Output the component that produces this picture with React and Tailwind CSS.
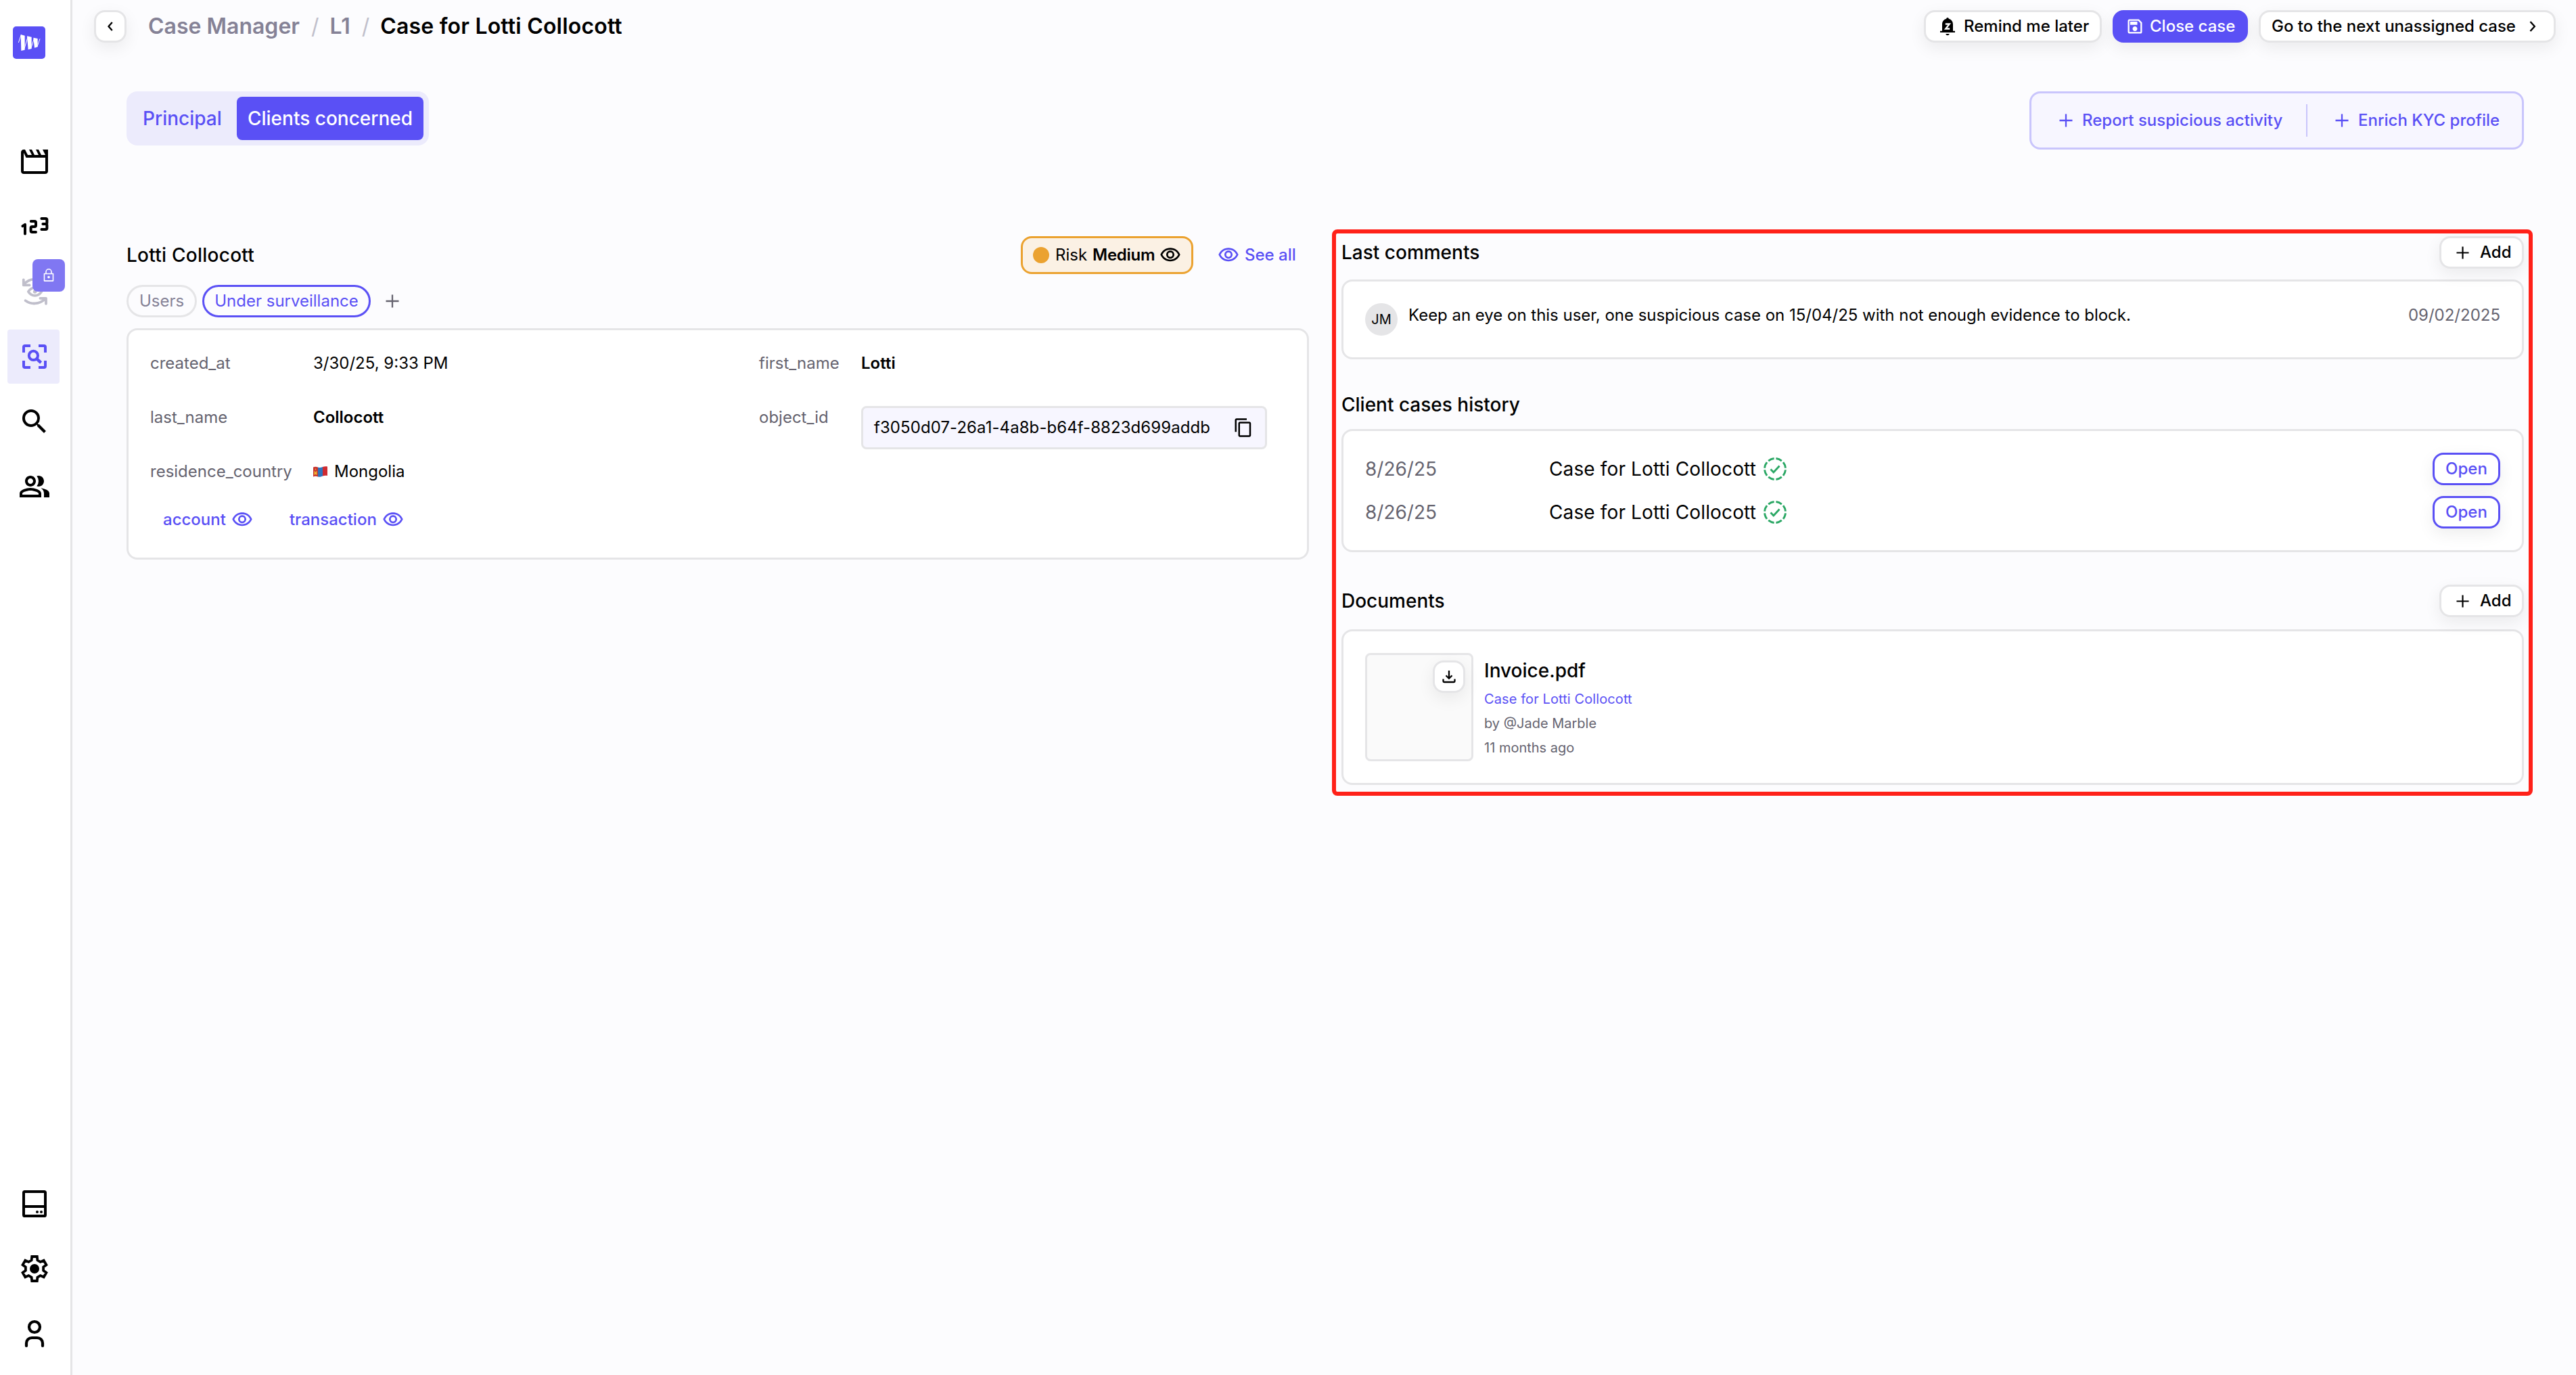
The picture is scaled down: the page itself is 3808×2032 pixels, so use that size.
import React from "react";
import { MdOutlineVisibility, MdOutlinePeopleAlt, MdSearch, MdOutlineSave, MdOutlineContentCopy } from "react-icons/md";

const stroke = (w) => ({
  fill: "none",
  stroke: "currentColor",
  strokeWidth: w,
  strokeLinecap: "round",
  strokeLinejoin: "round",
});

const Svg = ({ children, className = "size-12", box = "0 0 24 24" }) => (
  <svg viewBox={box} className={`shrink-0 ${className}`}>
    {children}
  </svg>
);

const Logo = () => (
  <svg viewBox="0 0 144 144" className="size-12 rounded-[5px] bg-[#5a50f5]" fill="#fff">
    <path d="M35 36 53 41V104L37 108Z M63 43 83 47V99L68 103Z M91 50 110 54V91L96 95Z" />
    <path d="M25 72 37 37M51 98 67 45M81 95 95 52M108 90 120 55" fill="none" stroke="#fff" strokeWidth="3" />
  </svg>
);

const MovieIcon = () => (
  <Svg>
    <path
      fill="currentColor"
      fillRule="evenodd"
      d="M22 3h-4l2 4h-3l-2-4h-2l2 4h-3l-2-4H8l2 4H7L5 3H4c-1.1 0-2 .9-2 2v14c0 1.1.9 2 2 2h16c1.1 0 2-.9 2-2V3zM4 5.4 5.76 9H20v10H4z"
    />
  </Svg>
);

const NumbersIcon = () => (
  <Svg>
    <g {...stroke(2)}>
      <path d="M3.2 11.6 5 10.4V17.3" />
      <path d="M9.4 8H12a1 1 0 0 1 1 1v2a1 1 0 0 1-1 1h-1.7a1 1 0 0 0-1 1v2a1 1 0 0 0 1 1H13" />
      <path d="M17.2 6h3a1 1 0 0 1 1 1v2a1 1 0 0 1-1 1h-2M20.2 10a1 1 0 0 1 1 1v2a1 1 0 0 1-1 1h-3" />
    </g>
  </Svg>
);

const MonitorIcon = () => (
  <Svg>
    <g {...stroke(1.9)}>
      <path d="M18.7 5.4C15 1.8 8.5 1.6 4.2 6.6M3.9 3.2v4h4.4" />
      <path d="M5.3 18.6c4.2 3 10 3 14.4-1M16.2 16.9h4.3v4" />
      <path d="M7.4 12c2.6-3.9 7.2-3.9 9.8 0-2.6 3.9-7.2 3.9-9.8 0z" />
    </g>
    <circle cx="12.3" cy="12" r="1.4" fill="currentColor" />
  </Svg>
);

const ScanIcon = () => (
  <Svg>
    <path
      d="M4 9V5a1 1 0 0 1 1-1h4M15 4h4a1 1 0 0 1 1 1v4M20 15v4a1 1 0 0 1-1 1h-4M9 20H5a1 1 0 0 1-1-1v-4"
      fill="none"
      stroke="currentColor"
      strokeWidth="2"
    />
    <circle cx="11.2" cy="11.2" r="3.3" fill="none" stroke="currentColor" strokeWidth="2" />
    <path d="M13.5 13.5 16.8 16.5" fill="none" stroke="currentColor" strokeWidth="2.2" />
  </Svg>
);

const DriveIcon = () => (
  <Svg>
    <rect x="4" y="3" width="16" height="18" rx="0.8" {...stroke(2)} />
    <path d="M4 14h16" {...stroke(2)} />
    <circle cx="14" cy="18" r="1" fill="currentColor" />
    <circle cx="17" cy="18" r="1" fill="currentColor" />
  </Svg>
);

const gearPath = (() => {
  const tooth = [[-2.2, -6.3], [-1.9, -9], [1.9, -9], [2.2, -6.3]];
  const pts = [];
  for (let i = 0; i < 6; i++) {
    const a = (i * Math.PI) / 3;
    tooth.forEach(([x, y]) =>
      pts.push(
        `${(12 + x * Math.cos(a) - y * Math.sin(a)).toFixed(2)} ${(12 + x * Math.sin(a) + y * Math.cos(a)).toFixed(2)}`
      )
    );
  }
  return `M${pts.join("L")}Z`;
})();

const GearIcon = () => (
  <Svg>
    <path d={gearPath} fill="none" stroke="currentColor" strokeWidth="1.9" />
    <circle cx="12" cy="12" r="3.5" fill="currentColor" />
  </Svg>
);

const UserIcon = () => (
  <Svg>
    <circle cx="12" cy="7" r="4" {...stroke(2.1)} />
    <path d="M6 21v-2a4 4 0 0 1 4-4h4a4 4 0 0 1 4 4v2" {...stroke(2.1)} />
  </Svg>
);

const LockIcon = () => (
  <Svg className="size-6">
    <path d="M5.5 9.5h13v10.6h-13z M8 9.5V6.8a4 4 0 0 1 8 0v2.7" {...stroke(1.6)} />
    <circle cx="12" cy="14.6" r="1.8" fill="currentColor" />
  </Svg>
);

const BellIcon = () => (
  <Svg className="h-7 w-[22px]" box="0 0 22 28">
    <path
      fill="currentColor"
      d="M11 1c1.1 0 1.7.8 1.8 1.8C16.6 3.7 19 7 19 11v9.7h3V23H0v-2.3h3V11c0-4 2.4-7.3 6.2-8.200C9.300 1.800 9.900 1 11 1zM8.300 25h5.400c-.4 1.500-1.400 2.200-2.700 2.200S8.700 26.500 8.300 25z"
    />
    <path d="M7.800 10.500h6L8.200 17.500h6" fill="none" stroke="#fff" strokeWidth="2.300" />
  </Svg>
);

const Plus = ({ className = "size-[19px]" }) => (
  <Svg className={className} box="0 0 20 20">
    <path d="M10 .5v19M.5 10h19" fill="none" stroke="currentColor" strokeWidth="2.300" />
  </Svg>
);

const DownloadIcon = () => (
  <Svg className="size-5" box="0 0 20 20">
    <path
      d="M10 1v11M5.500 8.200 10 12.700l4.500-4.500M1.500 13.500v3.200a1.300 1.300 0 0 0 1.300 1.300h14.400a1.300 1.300 0 0 0 1.300-1.300v-3.200"
      fill="none"
      stroke="currentColor"
      strokeWidth="2.300"
    />
  </Svg>
);

const ResolvedIcon = () => (
  <Svg className="size-9 text-[#2aa764]" box="0 0 36 36">
    <circle
      cx="18"
      cy="18"
      r="15.500"
      fill="none"
      stroke="currentColor"
      strokeWidth="2.900"
      pathLength="80"
      strokeDasharray="7.500 2.500"
      strokeDashoffset="-1.250"
    />
    <path d="m11.500 18.500 4.300 4.500 8.700-9.500" fill="none" stroke="currentColor" strokeWidth="2.800" />
  </Svg>
);

const MongoliaFlag = () => (
  <svg viewBox="0 0 21 16" className="h-4 w-[21px]">
    <path d="M0 1.500C2 .6 4.500 .6 7 1.500V15.500C4.500 14.600 2 14.600 0 15.500Z" fill="#c8352f" />
    <path d="M7 1.500C9.500 2.400 11.500 2 14 1V14.500C11.500 15.500 9.500 16.200 7 15.500Z" fill="#2f74bd" />
    <path d="M14 1C16.500 0 19 0 21 .5V14C19 13.600 16.500 13.600 14 14.500Z" fill="#cf2b31" />
    <path d="M1.500 7h1v6h-1zM4.500 7h1v6h-1zM2.500 8.500h2v3.500h-2zM3.500 3l1 2.500h-2z" fill="#f2b632" />
  </svg>
);

const NavItem = ({ children, active, muted }) => (
  <div
    className={`flex h-20 w-[77px] items-center rounded-[4px] pl-4 ${
      active ? "bg-[#ecebfc] text-[#5a50f5]" : muted ? "relative text-[#c0bfcb]" : "text-black"
    }`}
  >
    {children}
  </div>
);

const Sidebar = () => (
  <aside className="flex w-[107px] shrink-0 flex-col justify-between border-r-[3px] border-[#e5e5e7] bg-white pl-[11px]">
    <div>
      <div className="pt-[39px] pl-2">
        <Logo />
      </div>
      <nav className="mt-28 flex flex-col gap-4">
        <NavItem><MovieIcon /></NavItem>
        <NavItem><NumbersIcon /></NavItem>
        <NavItem muted>
          <MonitorIcon />
          <span className="absolute -top-2 left-[37px] flex size-12 items-center justify-center rounded-[8px] bg-[#8077f2] text-white">
            <LockIcon />
          </span>
        </NavItem>
        <NavItem active><ScanIcon /></NavItem>
        <NavItem><MdSearch className="size-12" /></NavItem>
        <NavItem><MdOutlinePeopleAlt className="size-12" /></NavItem>
      </nav>
    </div>
    <nav className="mb-[21px] flex flex-col gap-4">
      <NavItem><DriveIcon /></NavItem>
      <NavItem><GearIcon /></NavItem>
      <NavItem><UserIcon /></NavItem>
    </nav>
  </aside>
);

const Button = ({ children, className }) => (
  <button
    className={`flex h-12 shrink-0 items-center rounded-[16px] border-[3px] text-[24px] font-medium whitespace-nowrap shadow-[0_8px_24px_rgba(0,0,0,0.07)] ${className}`}
  >
    {children}
  </button>
);

const Header = () => (
  <header className="flex h-12 items-center justify-between pr-[30px] pl-8">
    <div className="flex items-center text-[32px] font-semibold whitespace-nowrap text-[#858296]">
      <Button className="w-12 justify-center border-[#e5e5e7] bg-white text-black">
        <Svg className="h-[14px] w-2" box="0 0 8 14">
          <path d="M6.800 1 1.500 7l5.300 6" fill="none" stroke="currentColor" strokeWidth="2.400" />
        </Svg>
      </Button>
      <span className="ml-8">Case Manager</span>
      <span className="ml-[17px] font-normal text-[#c0bfcb]">/</span>
      <span className="ml-4">L1</span>
      <span className="ml-[17px] font-normal text-[#c0bfcb]">/</span>
      <span className="ml-4 tracking-[0.19px] text-black">Case for Lotti Collocott</span>
    </div>
    <div className="flex gap-4">
      <Button className="w-[263px] gap-[13px] border-[#e5e5e7] bg-white pl-[21px] text-black">
        <BellIcon />
        Remind me later
      </Button>
      <Button className="w-[200px] gap-2 border-[#5a50f5] bg-[#5a50f5] pl-4 text-white">
        <MdOutlineSave className="size-7" />
        Close case
      </Button>
      <Button className="w-[439px] gap-5 border-[#e5e5e7] bg-white pl-4 text-black">
        Go to the next unassigned case
        <Svg className="h-4 w-[10px]" box="0 0 10 16">
          <path d="m1.500 1 6.300 7-6.300 7" fill="none" stroke="currentColor" strokeWidth="2.400" />
        </Svg>
      </Button>
    </div>
  </header>
);

const TopBar = () => (
  <div className="flex items-start justify-between">
    <div className="flex h-20 w-[447px] items-center rounded-[16px] bg-[#ecebfc] pl-2 text-[28px] font-medium whitespace-nowrap text-[#5a50f5]">
      <span className="w-[155px] pl-4">Principal</span>
      <span className="flex h-16 w-[276px] items-center justify-center rounded-[8px] bg-[#5a50f5] text-white">
        Clients concerned
      </span>
    </div>
    <div className="flex h-[86px] w-[731px] items-center rounded-[16px] border-[3px] border-[#c9c5fc] bg-[#f7f6ff] text-[24px] font-medium whitespace-nowrap text-[#5a50f5]">
      <span className="flex w-[406px] items-center gap-[14px] pl-[41px]">
        <Plus className="size-5" />
        Report suspicious activity
      </span>
      <span className="h-12 w-[2px] bg-[#c9c5fc]" />
      <span className="flex items-center gap-[14px] pl-[41px]">
        <Plus className="size-5" />
        Enrich KYC profile
      </span>
    </div>
  </div>
);

const Label = ({ children }) => <span className="self-center pt-[2px] text-[#65636f]">{children}</span>;

const EyeLink = ({ children }) => (
  <span className="flex items-center gap-2">
    {children}
    <MdOutlineVisibility className="size-8" />
  </span>
);

const ClientPanel = () => (
  <section className="w-[1748px]">
    <div className="flex h-14 items-center text-[24px]">
      <h2 className="flex-1 text-[28px] font-medium tracking-[0.25px]">Lotti Collocott</h2>
      <div className="flex h-14 w-[255px] items-center rounded-[16px] border-[3px] border-[#eba230] bg-[#fbf1e4] pl-[15px] whitespace-nowrap">
        <span className="size-6 rounded-full bg-[#eba230]" />
        <span className="ml-[9px]">Risk</span>
        <span className="ml-2 font-semibold tracking-[-0.3px]">Medium</span>
        <MdOutlineVisibility className="ml-[7px] size-8" />
      </div>
      <div className="ml-9 flex w-[135px] items-center gap-2 font-medium whitespace-nowrap text-[#5a50f5]">
        <MdOutlineVisibility className="size-8" />
        See all
      </div>
    </div>
    <div className="mt-4 flex h-12 items-center gap-2 text-[24px] whitespace-nowrap">
      <span className="flex h-12 w-[104px] items-center justify-center rounded-full border-[3px] border-[#e5e5e7] text-[#858296]">
        Users
      </span>
      <span className="flex h-12 w-[249px] items-center justify-center rounded-full border-[3px] border-[#5a50f5] text-[#5a50f5]">
        Under surveillance
      </span>
      <Plus className="ml-[14px] size-5 text-[#65636f]" />
    </div>
    <div className="mt-4 h-[342px] rounded-[16px] border-[3px] border-[#e5e5e7] bg-white px-8 pt-2 text-[24px] whitespace-nowrap">
      <div className="grid grid-cols-[241px_659px_151px_600px] grid-rows-[80px_80px_80px]">
        <Label>created_at</Label>
        <span className="self-center pt-[2px]">3/30/25, 9:33 PM</span>
        <Label>first_name</Label>
        <span className="self-center pt-[2px] font-semibold">Lotti</span>
        <Label>last_name</Label>
        <span className="self-center pt-[2px] font-semibold">Collocott</span>
        <Label>object_id</Label>
        <span className="mt-6 flex h-16 w-[600px] items-center justify-between rounded-[8px] border-[3px] border-[#e5e5e7] bg-[#f7f6ff] pr-[17px] pl-4 tracking-[0.07px]">
          f3050d07-26a1-4a8b-b64f-8823d699addb
          <MdOutlineContentCopy className="size-[30px]" />
        </span>
        <Label>residence_country</Label>
        <span className="flex items-center gap-[10px] pt-[2px]">
          <MongoliaFlag />
          Mongolia
        </span>
      </div>
      <div className="flex h-[64px] items-center gap-[54px] pl-[19px] font-medium text-[#5a50f5]">
        <EyeLink>account</EyeLink>
        <EyeLink>transaction</EyeLink>
      </div>
    </div>
  </section>
);

const AddButton = () => (
  <Button className="w-[125px] gap-4 border-[#e5e5e7] bg-white pl-[22px] text-black">
    <Plus />
    Add
  </Button>
);

const Card = ({ children, className }) => (
  <div className={`rounded-[16px] border-[3px] border-[#e5e5e7] bg-white px-8 ${className}`}>{children}</div>
);

const SectionTitle = ({ children }) => <h2 className="text-[28px] font-medium">{children}</h2>;

const HistoryRow = ({ date, title }) => (
  <div className="flex h-12 items-center text-[28px]">
    <span className="w-[272px] text-[#65636f]">{date}</span>
    <span className="mr-[10px] tracking-[0.13px]">{title}</span>
    <ResolvedIcon />
    <Button className="ml-auto w-[100px] justify-center border-[#5a50f5] bg-white text-[#5a50f5]">Open</Button>
  </div>
);

const ActivityPanel = () => (
  <section className="relative w-[1748px] whitespace-nowrap">
    <div className="flex h-12 items-center justify-between">
      <SectionTitle>Last comments</SectionTitle>
      <AddButton />
    </div>
    <Card className="mt-4 flex h-[118px] items-start pt-8 text-[24px]">
      <span className="flex size-12 items-center justify-center rounded-full bg-[#e5e5e7] text-[20px]">JM</span>
      <span className="ml-4 flex-1 leading-[36px] tracking-[-0.02px]">
        Keep an eye on this user, one suspicious case on 15/04/25 with not enough evidence to block.
      </span>
      <span className="leading-[36px] text-[#65636f]">09/02/2025</span>
    </Card>
    <div className="mt-[46px] flex h-[42px] items-center">
      <SectionTitle>Client cases history</SectionTitle>
    </div>
    <Card className="mt-[15px] flex h-[182px] flex-col gap-4 pt-8">
      <HistoryRow date="8/26/25" title="Case for Lotti Collocott" />
      <HistoryRow date="8/26/25" title="Case for Lotti Collocott" />
    </Card>
    <div className="mt-12 flex h-12 items-center justify-between">
      <SectionTitle>Documents</SectionTitle>
      <AddButton />
    </div>
    <Card className="mt-[18px] flex h-[230px] items-start gap-4 pt-8">
      <div className="flex size-40 justify-end rounded-[8px] border-[3px] border-[#e5e5e7] bg-[#fafafa] pt-2 pr-[9px]">
        <Button className="w-12 justify-center border-[#e5e5e7] bg-white text-black">
          <DownloadIcon />
        </Button>
      </div>
      <div className="pt-[5px] text-[20px] leading-[36px] text-[#65636f]">
        <p className="text-[28px] leading-[42px] font-medium text-black">Invoice.pdf</p>
        <p className="mt-[3px] tracking-[0.1px] text-[#5a50f5]">Case for Lotti Collocott</p>
        <p>by @Jade Marble</p>
        <p>11 months ago</p>
      </div>
    </Card>
    <div className="pointer-events-none absolute -top-[10px] -left-[14px] h-[837px] w-[1775px] rounded-[8px] border-[6px] border-[#ff2119]" />
  </section>
);

export default function App() {
  return (
    <div className="flex h-[2032px] w-[3808px] overflow-hidden bg-[#fcfcfe] font-['Inter',sans-serif] text-black">
      <Sidebar />
      <main className="flex-1 pt-[15px]">
        <Header />
        <div className="pt-[72px] pr-[77px] pl-20">
          <TopBar />
          <div className="mt-32 flex items-start justify-between">
            <ClientPanel />
            <ActivityPanel />
          </div>
        </div>
      </main>
    </div>
  );
}
